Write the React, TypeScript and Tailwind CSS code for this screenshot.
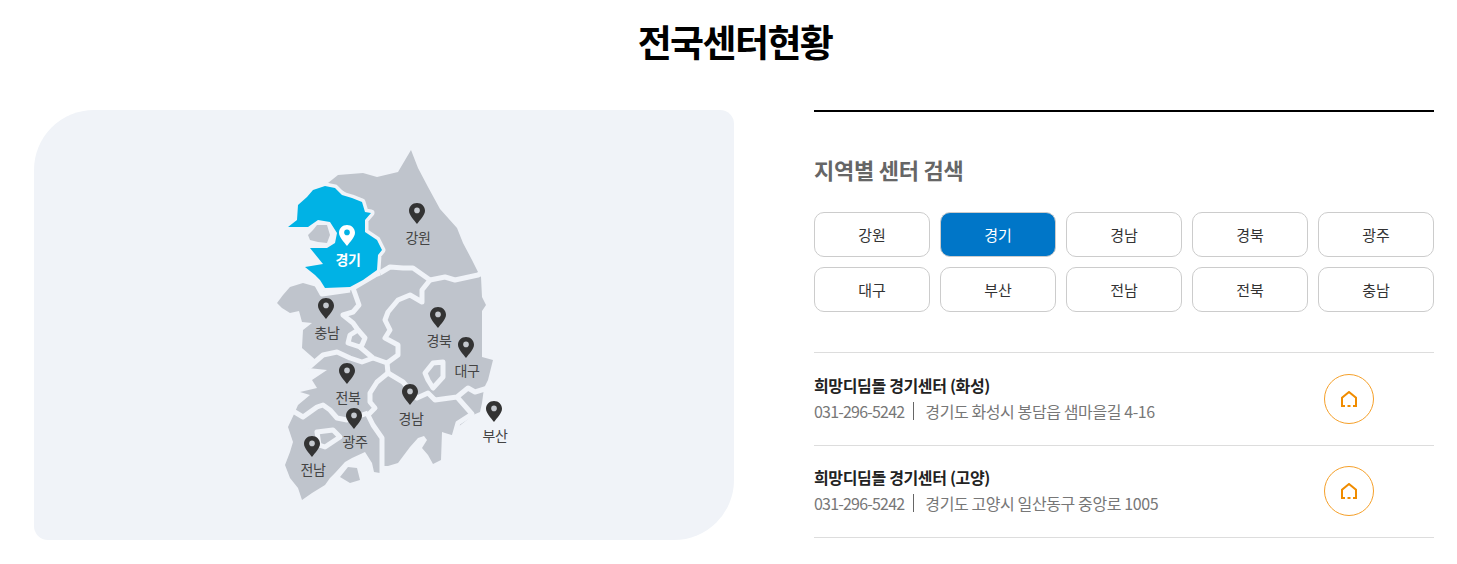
import { useState } from "react";

const regions = ["강원", "경기", "경남", "경북", "광주", "대구", "부산", "전남", "전북", "충남"];

const centers = [
  { name: "희망디딤돌 경기센터 (화성)", tel: "031-296-5242", address: "경기도 화성시 봉담읍 샘마을길 4-16" },
  { name: "희망디딤돌 경기센터 (고양)", tel: "031-296-5242", address: "경기도 고양시 일산동구 중앙로 1005" },
];

// x = pin centre, y = pin top, ly = label centre, in page pixels
const pins = [
  { name: "강원", x: 417, y: 203, ly: 237 },
  { name: "경기", x: 347, y: 225, ly: 259 },
  { name: "충남", x: 326, y: 298, ly: 332 },
  { name: "경북", x: 438, y: 307, ly: 340 },
  { name: "대구", x: 466, y: 337, ly: 370 },
  { name: "전북", x: 347, y: 363, ly: 397 },
  { name: "경남", x: 410, y: 384, ly: 418 },
  { name: "광주", x: 354, y: 408, ly: 441 },
  { name: "전남", x: 312, y: 436, ly: 469 },
  { name: "부산", x: 494, y: 401, ly: 435 },
];

const land =
  "M411,150 L418,168 L428,187 L440,209 L457,228 L463,243 L472,260 L478,272 L481,277 L482,297 L486,305 L482,311 L482,357 L493,360 L488,380 L484,388 L482,403 L480,412 L473,415 L458,427 L455,436 L445,433 L442,432 L441,460 L433,464 L428,455 L422,448 L427,440 L424,436 L418,438 L410,447 L398,463 L388,466 L383,466 L380,473 L374,472 L372,463 L365,452 L352,458 L345,462 L335,473 L330,478 L325,485 L312,493 L302,500 L298,488 L290,478 L285,465 L290,452 L293,442 L288,427 L295,412 L298,405 L310,395 L300,392 L317,388 L312,380 L327,370 L308,368 L318,362 L302,348 L303,330 L312,323 L302,322 L299,311 L290,313 L282,308 L277,303 L283,295 L290,287 L303,283 L317,287 L322,292 L340,275 L360,255 L368,235 L360,208 L345,192 L328,183 L338,175 L363,173 L377,177 L398,172 Z " +
  "M340,477 L350,483 L360,480 L357,468 L348,467 Z";

const gyeonggi =
  "M313,190 L325,186 L335,188 L342,195 L352,198 L362,202 L365,212 L371,213 L365,220 L365,232 L377,240 L382,250 L378,255 L377,270 L363,280 L350,287 L325,288 L320,280 L315,275 L305,267 L323,264 L310,248 L327,248 L335,243 L337,233 L330,222 L318,220 L308,227 L288,227 L297,220 L298,205 L307,197 Z";

const seoul = "M308,235 L313,230 L317,225 L327,225 L330,235 L327,243 L318,242 L310,240 Z";

const borders = [
  "M380,273 L390,267 L403,268 L413,268 L430,280 L445,277 L455,280 L478,275 L483,272",
  "M430,280 L422,290 L422,302 L410,295 L398,300 L388,312 L385,320 L390,330 L385,338 L398,345 L398,355 L387,363",
  "M380,273 L375,275 L353,288 L359,305 L353,312 L343,315 L353,323 L358,330 L350,335 L348,343 L360,347 L373,358 L387,363 L388,373",
  "M358,330 L365,338 L362,345 L358,348",
  "M317,285 L322,294 L336,292 L350,290",
  "M308,368 L323,355 L337,352 L350,358 L362,362 L373,358",
  "M388,373 L377,382 L370,393 L370,402 L375,408 L368,415 L373,425 L382,438 L382,476",
  "M388,373 L403,382 L410,390 L417,398 L428,393 L435,400 L457,397 L468,388 L475,392 L488,388",
  "M425,373 L433,363 L443,362 L443,377 L433,388 L428,380 Z",
  "M457,397 L472,414 L458,423 L454,437",
  "M293,411 L303,417 L317,407 L323,405 L330,410 L337,418 L347,420 L368,413",
  "M317,432 L333,430 L340,437 L325,447 L319,445 Z",
];

function Pin({ color, dot }: { color: string; dot: string }) {
  return (
    <svg width="16" height="21" viewBox="0 0 16 21" className="block">
      <path d="M8,0 C3.4,0 0,3.4 0,7.8 C0,12.2 5,17 8,21 C11,17 16,12.2 16,7.8 C16,3.4 12.6,0 8,0 Z" fill={color} />
      <circle cx="8" cy="7.4" r="2.8" fill={dot} />
    </svg>
  );
}

function HomeIcon() {
  return (
    <svg width="16" height="16" viewBox="0 0 16 16" fill="none" stroke="#f08c00" strokeWidth="2">
      <path d="M4,15 H1 V6.8 L8,1 L15,6.8 V15 H12" />
      <path d="M6.5,15 H9.5" />
    </svg>
  );
}

export default function App() {
  const [active, setActive] = useState("경기");

  return (
    <div className="h-[564px] w-[1457px] overflow-hidden bg-white pl-[34px] font-['Noto_Sans_CJK_KR','Noto_Sans',sans-serif]">
      <h2 className="h-[110px] w-[1402px] pt-[13px] text-center text-[37px] leading-[56px] font-bold tracking-[-1.6px] text-black">
        전국센터현황
      </h2>

      <div className="flex w-[1400px] gap-[80px]">
        <div className="h-[430px] w-[700px] rounded-[14px] rounded-tl-[60px] rounded-br-[60px] bg-[#f0f3f8] pt-[30px] pl-[226px]">
          <div className="relative h-[370px] w-[260px]">
            <svg width="260" height="370" viewBox="260 140 260 370" className="block">
              <path d={land} fill="#bfc4cc" />
              {borders.map((d) => (
                <path key={d} d={d} fill="none" stroke="#f0f3f8" strokeWidth="5" strokeLinejoin="round" />
              ))}
              <path d={gyeonggi} fill="#00b2e5" stroke="#f0f3f8" strokeWidth="7" strokeLinejoin="round" paintOrder="stroke" />
              <path d={seoul} fill="#bfc4cc" />
            </svg>
            {pins.map((pin) => {
              const on = pin.name === active;
              return (
                <div key={pin.name}>
                  <div className="absolute" style={{ left: pin.x - 268, top: pin.y - 140 }}>
                    <Pin color={on ? "#ffffff" : "#333333"} dot={on ? "#00b2e5" : "#c4c8ce"} />
                  </div>
                  <span
                    className={
                      on
                        ? "absolute w-10 text-center text-[14px] leading-5 font-bold tracking-[-0.5px] text-white"
                        : "absolute w-10 text-center text-[14px] leading-5 tracking-[-0.5px] text-[#444]"
                    }
                    style={{ left: pin.x - 279, top: pin.ly - 150 }}
                  >
                    {pin.name}
                  </span>
                </div>
              );
            })}
          </div>
        </div>

        <div className="w-[620px]">
          <div className="border-t-2 border-black pt-[41px]">
            <h3 className="text-[22px] leading-[32px] font-bold tracking-[-0.25px] text-[#666]">지역별 센터 검색</h3>
          </div>

          <div className="mt-[27px] grid grid-cols-5 gap-[10px]">
            {regions.map((region) => (
              <button
                key={region}
                onClick={() => setActive(region)}
                className={
                  region === active
                    ? "h-[45px] rounded-[10px] border border-[#ccc] bg-[#0076c8] pt-[2px] text-[15px] text-white"
                    : "h-[45px] rounded-[10px] border border-[#ccc] bg-white pt-[2px] text-[15px] text-[#333]"
                }
              >
                {region}
              </button>
            ))}
          </div>

          <ul className="mt-[40px] border-t border-[#ddd]">
            {centers.map((center) => (
              <li key={center.name} className="flex h-[92.5px] items-center justify-between border-b border-[#ddd] pr-[60px]">
                <div className="pb-[2px]">
                  <p className="text-[16px] leading-[26px] font-bold tracking-[-0.35px] text-[#222]">{center.name}</p>
                  <p className="flex items-center text-[16px] leading-[26px] tracking-[-0.8px] text-[#777]">
                    {center.tel}
                    <span className="mr-[11px] ml-[9px] h-[18px] w-px bg-[#666]" />
                    <span className="tracking-[-0.4px]">{center.address}</span>
                  </p>
                </div>
                <a className="flex h-[50px] w-[50px] items-center justify-center rounded-full border border-[#f5a02a]">
                  <HomeIcon />
                </a>
              </li>
            ))}
          </ul>
        </div>
      </div>
    </div>
  );
}
